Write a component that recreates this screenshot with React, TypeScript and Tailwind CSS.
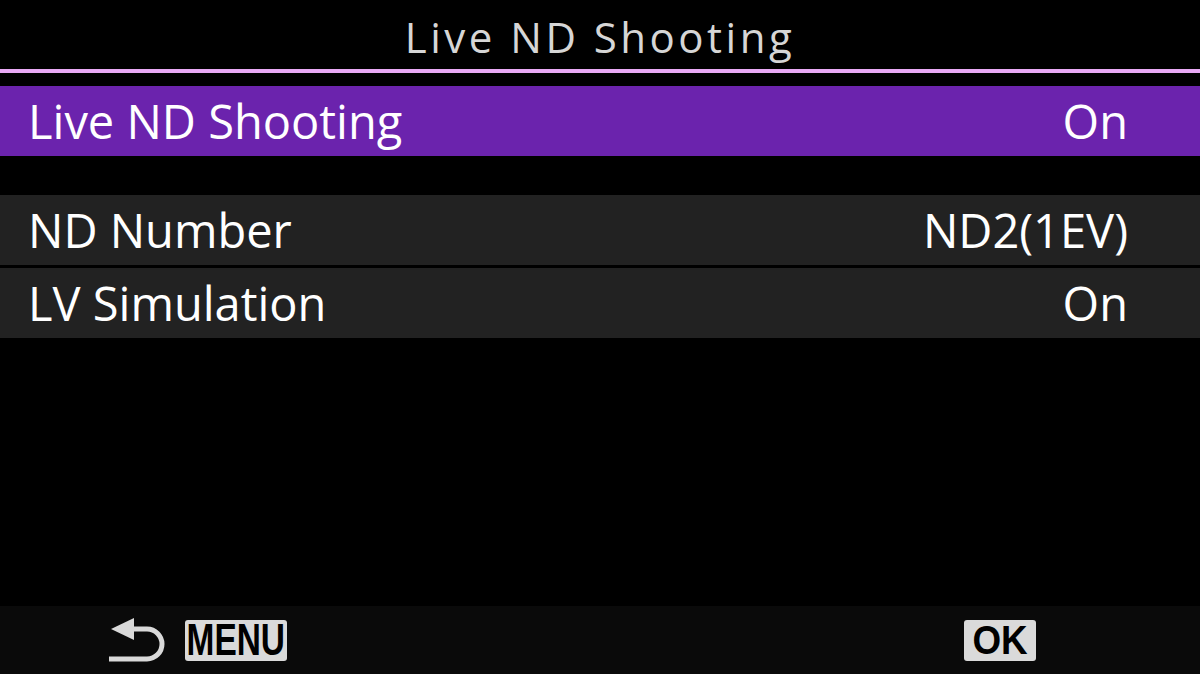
import React from 'react';

interface RowProps {
  label: string;
  value: string;
  selected?: boolean;
}

function MenuRow({ label, value, selected }: RowProps) {
  return (
    <div
      className={`flex h-[70px] items-center justify-between pl-[28px] pr-[72px] text-[47px] leading-none text-white ${
        selected ? 'bg-[#6b23ad]' : 'bg-[#222222]'
      }`}
    >
      <span>{label}</span>
      <span>{value}</span>
    </div>
  );
}

// back arrow drawn as on the camera screen
function BackArrow() {
  return (
    <svg width="58" height="48" viewBox="0 0 58 48" className="block">
      <polygon points="4,13 27,2 27,24" fill="#d9d9d9" />
      <path
        d="M26 13 H40 A15 15 0 0 1 40 43 H2"
        fill="none"
        stroke="#d9d9d9"
        strokeWidth="5"
      />
    </svg>
  );
}

function Badge({ children, width }: { children: React.ReactNode; width: string }) {
  return (
    <div
      className={`flex h-[41px] items-center justify-center rounded-[3px] bg-[#dadada] ${width}`}
    >
      {children}
    </div>
  );
}

export default function App() {
  return (
    <div className="flex h-[674px] w-[1200px] flex-col overflow-hidden bg-black font-['Open_Sans',sans-serif]">
      {/* Title */}
      <div className="flex h-[69px] items-center justify-center pt-[4px] text-[42px] leading-none tracking-[3.5px] text-[#d6d6d6]">
        Live ND Shooting
      </div>
      <div className="h-[4px] bg-[#e8a9f4]" />
      <div className="h-[13px]" />

      <MenuRow label="Live ND Shooting" value="On" selected />

      <div className="h-[39px]" />

      <div className="flex flex-col gap-[3px]">
        <MenuRow label="ND Number" value="ND2(1EV)" />
        <MenuRow label="LV Simulation" value="On" />
      </div>

      <div className="flex-1" />

      {/* Footer */}
      <div className="flex h-[68px] items-center bg-[#0a0a0a] pl-[107px] pr-[164px]">
        <BackArrow />
        <div className="ml-[20px]">
          <Badge width="w-[102px]">
            <span className="inline-block origin-center scale-x-[0.76] font-['Liberation_Sans',sans-serif] text-[44px] font-bold leading-none text-black">
              MENU
            </span>
          </Badge>
        </div>
        <div className="ml-auto">
          <Badge width="w-[72px]">
            <span className="inline-block origin-center scale-x-[0.92] font-['Liberation_Sans',sans-serif] text-[40px] font-bold leading-none text-black">
              OK
            </span>
          </Badge>
        </div>
      </div>
    </div>
  );
}
